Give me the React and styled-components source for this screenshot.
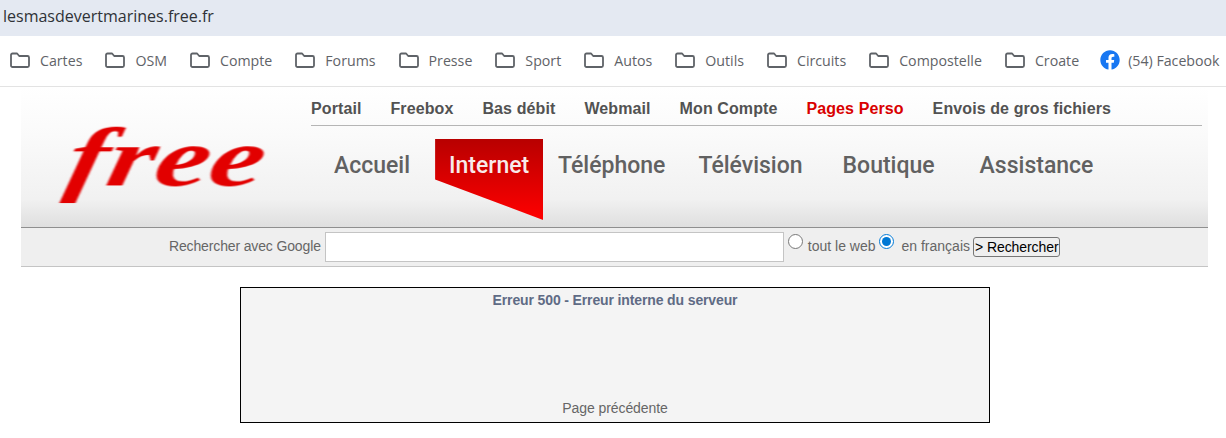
import React from "react"
import styled, { createGlobalStyle } from "styled-components"
import { FaFacebook } from "react-icons/fa"

const GlobalStyle = createGlobalStyle`
  html, body {
    margin: 0;
    padding: 0;
    background: #fff;
    overflow: hidden;
  }
`

const AddressBar = styled.div`
  height: 36px;
  background: #e4e9f2;
  padding-left: 3px;
  font-family: "Open Sans", sans-serif;
  font-size: 16px;
  line-height: 33px;
  color: #2f3237;
`

const BookmarkBar = styled.div`
  height: 50px;
  box-sizing: content-box;
  border-bottom: 1px solid #e3e3e3;
  display: flex;
  align-items: center;
  padding-left: 10px;
  gap: 23px;
  white-space: nowrap;
  overflow: hidden;
`

const Bookmark = styled.div`
  display: flex;
  align-items: center;
  gap: ${(p) => (p.$compact ? "8px" : "10px")};
  margin: ${(p) => (p.$compact ? "0 0 2px -2px" : "0 0 2px 0")};
  font-family: "Open Sans", sans-serif;
  font-size: 14.2px;
  color: #5f6368;
`

const Page = styled.div`
  width: 1187px;
  margin-left: 21px;
`

const Header = styled.header`
  height: 140px;
  display: flex;
  background: linear-gradient(#fff 0%, #fafafa 35%, #f1f1f1 80%, #dfdfdf 100%);
  border-bottom: 1px solid #8f8f8f;
`

const LogoCell = styled.div`
  width: 290px;
  flex: none;
  padding: 27px 0 0 57px;
  box-sizing: border-box;
`

const LogoText = styled.div`
  display: inline-block;
  font-family: "Liberation Serif", serif;
  font-style: italic;
  font-weight: 700;
  font-size: 82px;
  line-height: 88px;
  color: #e20000;
  transform-origin: left top;
  transform: scaleX(1.49) skewX(-8deg);
  filter: blur(0.6px);
`

const HeaderRight = styled.div`
  width: 891px;
`

const TopLinks = styled.nav`
  height: 39px;
  display: flex;
  align-items: center;
  gap: 29px;
  border-bottom: 1px solid #b5b5b5;
  box-sizing: border-box;
  padding-top: 5px;
  font-family: "Liberation Sans", sans-serif;
  font-size: 16px;
  font-weight: 700;
  letter-spacing: 0.1px;
`

const TopLink = styled.a`
  color: ${(p) => (p.$active ? "#d90000" : "#525252")};
`

const MainNav = styled.nav`
  display: flex;
  padding-top: 13px;
  font-family: Roboto, sans-serif;
  font-size: 23px;
  font-weight: 500;
  color: #616161;
`

const NavItem = styled.a`
  margin-left: ${(p) => p.$offset}px;
  height: 54px;
  line-height: 54px;
  white-space: nowrap;
`

const ActiveTab = styled.a`
  margin-left: 25px;
  width: 108px;
  height: 81px;
  line-height: 54px;
  text-align: center;
  color: #f8eaea;
  background: linear-gradient(#b80000, #ff0000);
  clip-path: polygon(0 0, 100% 0, 100% 100%, 0 50%);
`

const SearchBar = styled.form`
  height: 38px;
  margin: 0;
  background: #efefef;
  border-bottom: 1px solid #c4c4c4;
  display: flex;
  align-items: center;
  padding-left: 148px;
  font-family: "Liberation Sans", sans-serif;
  font-size: 14px;
  color: #666;
`

const SearchLabel = styled.span`
  margin-bottom: 2px;
  letter-spacing: ${(p) => (p.$tight ? "-0.14px" : "0")};
`

const SearchInput = styled.input`
  width: 459px;
  height: 30px;
  box-sizing: border-box;
  margin-left: 4px;
  border: 1px solid #c4c4c4;
  background: #fff;
  outline: none;
`

const Radio = styled.input`
  width: 15px;
  height: 15px;
  margin: 0 ${(p) => p.$after}px 11px ${(p) => p.$before}px;
  accent-color: #0078d4;
`

const SearchButton = styled.button`
  height: 20px;
  margin: 0 0 1px 3px;
  padding: 0 1px;
  border: 1px solid #767676;
  border-radius: 3px;
  background: #efefef;
  font-family: "Liberation Sans", sans-serif;
  font-size: 14px;
  letter-spacing: -0.08px;
  color: #000;
`

const ErrorBox = styled.main`
  width: 750px;
  height: 136px;
  box-sizing: border-box;
  margin: 20px 0 0 219px;
  border: 1px solid #000;
  background: #f4f4f4;
  display: flex;
  flex-direction: column;
  justify-content: space-between;
  align-items: center;
  padding: 4px 0 6px;
  font-family: "Liberation Sans", sans-serif;
  font-size: 14px;
  line-height: 16px;
`

const ErrorTitle = styled.div`
  font-weight: 700;
  letter-spacing: -0.13px;
  color: #5f6b85;
`

const BackLink = styled.a`
  letter-spacing: -0.07px;
  color: #666;
`

const FolderIcon = () => (
  <svg width="20" height="16" viewBox="0 0 20 16" fill="none">
    <path
      d="M1 3a1.5 1.5 0 0 1 1.5-1.5h4.6L9.2 4h8.3A1.5 1.5 0 0 1 19 5.5v8a1.5 1.5 0 0 1-1.5 1.5h-15A1.5 1.5 0 0 1 1 13.5z"
      stroke="#5f6368"
      strokeWidth="1.8"
      strokeLinejoin="round"
    />
  </svg>
)

const bookmarks = [
  "Cartes",
  "OSM",
  "Compte",
  "Forums",
  "Presse",
  "Sport",
  "Autos",
  "Outils",
  "Circuits",
  "Compostelle",
  "Croate",
]

const topLinks = [
  "Portail",
  "Freebox",
  "Bas débit",
  "Webmail",
  "Mon Compte",
  "Pages Perso",
  "Envois de gros fichiers",
]

export default function App() {
  return (
    <>
      <GlobalStyle />
      <AddressBar>lesmasdevertmarines.free.fr</AddressBar>
      <BookmarkBar>
        {bookmarks.map((name) => (
          <Bookmark key={name}>
            <FolderIcon />
            {name}
          </Bookmark>
        ))}
        <Bookmark $compact>
          <FaFacebook size={20} color="#1877f2" />
          (54) Facebook
        </Bookmark>
      </BookmarkBar>
      <Page>
        <Header>
          <LogoCell>
            <LogoText>free</LogoText>
          </LogoCell>
          <HeaderRight>
            <TopLinks>
              {topLinks.map((name) => (
                <TopLink key={name} $active={name === "Pages Perso"}>
                  {name}
                </TopLink>
              ))}
            </TopLinks>
            <MainNav>
              <NavItem $offset={23}>Accueil</NavItem>
              <ActiveTab>Internet</ActiveTab>
              <NavItem $offset={15}>Téléphone</NavItem>
              <NavItem $offset={33}>Télévision</NavItem>
              <NavItem $offset={40}>Boutique</NavItem>
              <NavItem $offset={45}>Assistance</NavItem>
            </MainNav>
          </HeaderRight>
        </Header>
        <SearchBar>
          <SearchLabel $tight>Rechercher avec Google</SearchLabel>
          <SearchInput type="text" />
          <Radio type="radio" name="where" $before={4} $after={5} />
          <SearchLabel>tout le web</SearchLabel>
          <Radio type="radio" name="where" $before={3} $after={8} defaultChecked />
          <SearchLabel>en français</SearchLabel>
          <SearchButton type="button">&gt; Rechercher</SearchButton>
        </SearchBar>
        <ErrorBox>
          <ErrorTitle>Erreur 500 - Erreur interne du serveur</ErrorTitle>
          <BackLink>Page précédente</BackLink>
        </ErrorBox>
      </Page>
    </>
  )
}
